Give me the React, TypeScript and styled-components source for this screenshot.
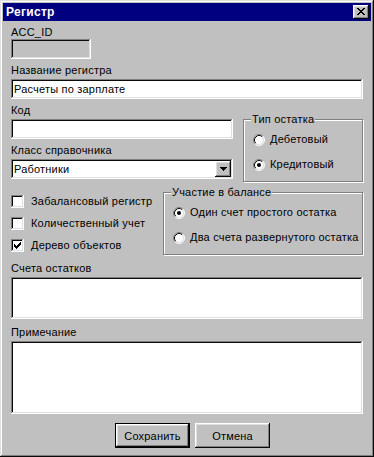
import React from 'react';
import styled, { createGlobalStyle } from 'styled-components';

const GlobalStyle = createGlobalStyle`
  html, body {
    margin: 0;
    padding: 0;
    background: #c0c0c0;
  }
  body {
    font-family: "Liberation Sans", Arial, sans-serif;
    font-size: 11px;
    letter-spacing: 0.2px;
    color: #000;
  }
`;

// classic 3D bevels
const sunken = `
  box-shadow: inset -1px -1px #fff, inset 1px 1px #808080,
    inset -2px -2px #dfdfdf, inset 2px 2px #0a0a0a;
`;
const raised = `
  box-shadow: inset -1px -1px #0a0a0a, inset 1px 1px #fff,
    inset -2px -2px #808080, inset 2px 2px #dfdfdf;
`;
const etched = `
  border: 1px solid #808080;
  box-shadow: inset 1px 1px #fff, 1px 1px #fff;
`;

const Window = styled.div`
  box-sizing: border-box;
  width: 374px;
  height: 457px;
  padding: 3px;
  background: #c0c0c0;
  box-shadow: inset -1px -1px #0a0a0a, inset 1px 1px #dfdfdf,
    inset -2px -2px #808080, inset 2px 2px #fff;
  display: flex;
  flex-direction: column;
`;

const TitleBar = styled.div`
  height: 18px;
  background: #000080;
  display: flex;
  align-items: center;
  justify-content: space-between;
  padding: 0 2px 0 3px;
`;

const TitleText = styled.span`
  color: #fff;
  font-weight: bold;
  font-size: 12px;
  letter-spacing: 0.3px;
  line-height: 18px;
`;

const CloseButton = styled.button`
  width: 16px;
  height: 14px;
  padding: 0 1px 1px 0;
  border: none;
  background: #c0c0c0;
  ${raised}
  display: flex;
  align-items: center;
  justify-content: center;
`;

const Body = styled.div`
  padding: 5px 8px 0;
  display: flex;
  flex-direction: column;
`;

const Label = styled.div<{ $mt?: number; $mb?: number }>`
  height: 13px;
  line-height: 13px;
  white-space: nowrap;
  margin-top: ${p => p.$mt ?? 5}px;
  margin-bottom: ${p => p.$mb ?? 2}px;
`;

const TextInput = styled.input<{ $width?: number; $disabled?: boolean }>`
  box-sizing: border-box;
  width: ${p => (p.$width ? `${p.$width}px` : '100%')};
  height: 20px;
  margin: 0;
  padding: 0 3px;
  border: none;
  outline: none;
  font: inherit;
  letter-spacing: inherit;
  color: #000;
  background: ${p => (p.$disabled ? '#c0c0c0' : '#fff')};
  ${sunken}
`;

const Row = styled.div<{ $gap?: number }>`
  display: flex;
  align-items: flex-start;
  justify-content: space-between;
  gap: ${p => p.$gap ?? 10}px;
`;

const Column = styled.div<{ $width?: number; $mt?: number }>`
  display: flex;
  flex-direction: column;
  width: ${p => (p.$width ? `${p.$width}px` : 'auto')};
  margin-top: ${p => p.$mt ?? 0}px;
`;

const Combo = styled.div`
  box-sizing: border-box;
  height: 20px;
  padding: 2px;
  background: #fff;
  ${sunken}
  display: flex;
  align-items: center;
`;

const ComboText = styled.span`
  flex: 1;
  padding-left: 1px;
  line-height: 16px;
`;

const ComboButton = styled.div`
  width: 16px;
  height: 16px;
  background: #c0c0c0;
  ${raised}
  display: flex;
  align-items: center;
  justify-content: center;
`;

const GroupBox = styled.div<{ $width: number; $mt: number }>`
  box-sizing: border-box;
  width: ${p => p.$width}px;
  margin-top: ${p => p.$mt}px;
  ${etched}
  padding: 0 8px 10px 9px;
  display: flex;
  flex-direction: column;
`;

const Caption = styled.div`
  width: fit-content;
  height: 13px;
  line-height: 13px;
  margin: -7px 0 0 -2px;
  padding: 0 1px;
  background: #c0c0c0;
  white-space: nowrap;
`;

const OptionList = styled.div<{ $mt?: number; $gap?: number }>`
  display: flex;
  flex-direction: column;
  gap: ${p => p.$gap ?? 12}px;
  margin-top: ${p => p.$mt ?? 7}px;
`;

const OptionRow = styled.div<{ $gap?: number }>`
  height: 13px;
  display: flex;
  align-items: center;
  gap: ${p => p.$gap ?? 5}px;
  line-height: 13px;
  white-space: nowrap;
`;

const CheckBox = styled.div`
  width: 13px;
  height: 13px;
  flex: none;
  background: #fff;
  ${sunken}
  display: flex;
  align-items: center;
  justify-content: center;
`;

const ListBox = styled.div<{ $height: number }>`
  height: ${p => p.$height}px;
  background: #fff;
  ${sunken}
`;

const Memo = styled.textarea<{ $height: number }>`
  box-sizing: border-box;
  display: block;
  width: 100%;
  height: ${p => p.$height}px;
  margin: 0;
  padding: 2px 3px;
  border: none;
  outline: none;
  resize: none;
  font: inherit;
  background: #fff;
  ${sunken}
`;

const ButtonRow = styled.div`
  display: flex;
  gap: 5px;
  margin-top: 9px;
  padding-left: 104px;
`;

const Button = styled.button<{ $default?: boolean }>`
  box-sizing: border-box;
  width: 75px;
  height: 25px;
  margin: 0;
  padding: 0;
  font: inherit;
  letter-spacing: inherit;
  color: #000;
  background: #c0c0c0;
  border: ${p => (p.$default ? '1px solid #000' : 'none')};
  ${raised}
`;

const CloseGlyph = () => (
  <svg width="8" height="7" viewBox="0 0 8 7" shapeRendering="crispEdges">
    <path
      fill="#000"
      d="M0 0h2v1H0z M6 0h2v1H6z M1 1h2v1H1z M5 1h2v1H5z M2 2h4v1H2z M3 3h2v1H3z M2 4h4v1H2z M1 5h2v1H1z M5 5h2v1H5z M0 6h2v1H0z M6 6h2v1H6z"
    />
  </svg>
);

const ArrowDown = () => (
  <svg width="7" height="4" viewBox="0 0 7 4" shapeRendering="crispEdges">
    <path fill="#000" d="M0 0h7v1H0z M1 1h5v1H1z M2 2h3v1H2z M3 3h1v1H3z" />
  </svg>
);

const Tick = () => (
  <svg width="7" height="7" viewBox="0 0 7 7" shapeRendering="crispEdges">
    <path
      fill="#000"
      d="M6 0h1v1H6z M5 1h2v1H5z M0 2h1v1H0z M4 2h3v1H4z M0 3h2v1H0z M3 3h3v1H3z M0 4h5v1H0z M1 5h3v1H1z M2 6h1v1H2z"
    />
  </svg>
);

const Radio: React.FC<{ checked?: boolean }> = ({ checked }) => (
  <svg width="12" height="12" viewBox="0 0 12 12" style={{ flex: 'none' }}>
    <circle cx="6" cy="6" r="5" fill="#fff" />
    <path d="M2.11 9.89 A5.5 5.5 0 0 1 9.89 2.11" stroke="#808080" fill="none" />
    <path d="M9.89 2.11 A5.5 5.5 0 0 1 2.11 9.89" stroke="#fff" fill="none" />
    <path d="M2.82 9.18 A4.5 4.5 0 0 1 9.18 2.82" stroke="#0a0a0a" fill="none" />
    <path d="M9.18 2.82 A4.5 4.5 0 0 1 2.82 9.18" stroke="#dfdfdf" fill="none" />
    {checked && <circle cx="6" cy="6" r="2" fill="#000" />}
  </svg>
);

const Option: React.FC<{ label: string; checked?: boolean }> = ({ label, checked }) => (
  <OptionRow>
    <Radio checked={checked} />
    <span>{label}</span>
  </OptionRow>
);

const Check: React.FC<{ label: string; checked?: boolean }> = ({ label, checked }) => (
  <OptionRow $gap={7}>
    <CheckBox>{checked && <Tick />}</CheckBox>
    <span>{label}</span>
  </OptionRow>
);

const App: React.FC = () => {
  return (
    <>
      <GlobalStyle />
      <Window>
        <TitleBar>
          <TitleText>Регистр</TitleText>
          <CloseButton>
            <CloseGlyph />
          </CloseButton>
        </TitleBar>

        <Body>
          <Label $mt={0} $mb={0}>ACC_ID</Label>
          <TextInput $width={80} $disabled readOnly value="" />

          <Label>Название регистра</Label>
          <TextInput readOnly value="Расчеты по зарплате" />

          <Row>
            <Column $width={222}>
              <Label>Код</Label>
              <TextInput readOnly value="" />
              <Label>Класс справочника</Label>
              <Combo>
                <ComboText>Работники</ComboText>
                <ComboButton>
                  <ArrowDown />
                </ComboButton>
              </Combo>
            </Column>
            <GroupBox $width={120} $mt={20}>
              <Caption>Тип остатка</Caption>
              <OptionList>
                <Option label="Дебетовый" />
                <Option label="Кредитовый" checked />
              </OptionList>
            </GroupBox>
          </Row>

          <Row>
            <Column $mt={13}>
              <OptionList $mt={0} $gap={9}>
                <Check label="Забалансовый регистр" />
                <Check label="Количественный учет" />
                <Check label="Дерево объектов" checked />
              </OptionList>
            </Column>
            <GroupBox $width={200} $mt={10}>
              <Caption>Участие в балансе</Caption>
              <OptionList>
                <Option label="Один счет простого остатка" checked />
                <Option label="Два счета развернутого остатка" />
              </OptionList>
            </GroupBox>
          </Row>

          <Label $mt={7}>Счета остатков</Label>
          <ListBox $height={42} />

          <Label $mt={7}>Примечание</Label>
          <Memo $height={73} readOnly value="" />

          <ButtonRow>
            <Button $default>Сохранить</Button>
            <Button>Отмена</Button>
          </ButtonRow>
        </Body>
      </Window>
    </>
  );
};

export default App;
